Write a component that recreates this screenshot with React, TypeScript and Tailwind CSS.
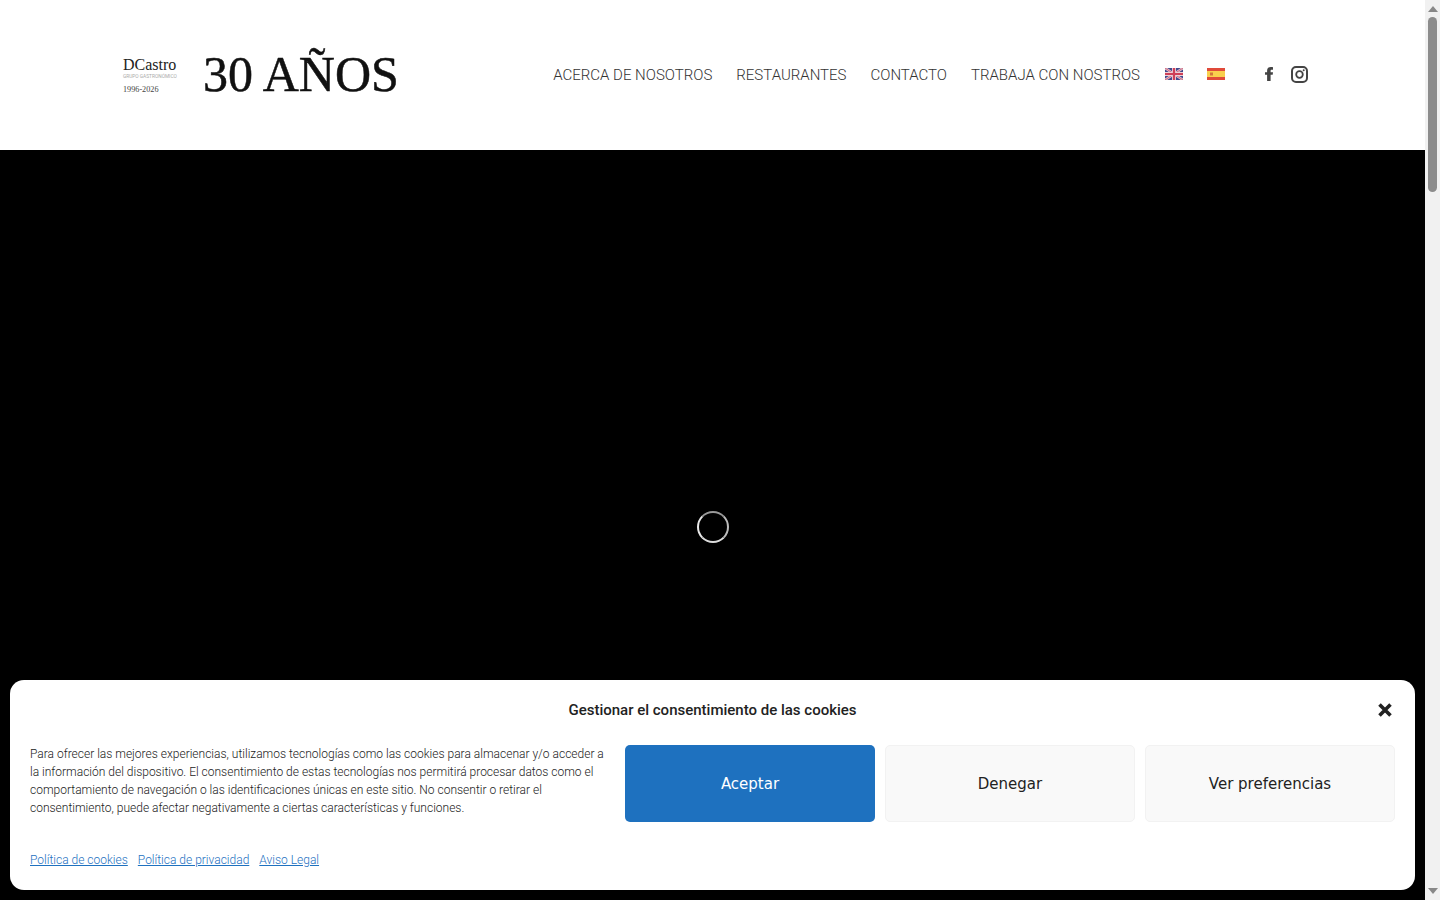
import React from 'react';

const navItems = ['ACERCA DE NOSOTROS', 'RESTAURANTES', 'CONTACTO', 'TRABAJA CON NOSTROS'];

const Logo = () => (
  <div className="flex items-center">
    <div className="w-[80px] h-[50px] flex flex-col text-[#222]">
      <span className="mt-[6px] text-[16px] leading-[18px] font-['Liberation_Serif',serif]">DCastro</span>
      <span className="text-[4.800px] leading-[6px] text-[#aaa] font-['Roboto',sans-serif] whitespace-nowrap">GRUPO GASTRONÓMICO</span>
      <span className="mt-[4px] text-[8.200px] leading-[12px] text-[#444] font-['Liberation_Serif',serif]">1996-2026</span>
    </div>
    <span className="mb-[2px] text-[50px] leading-[50px] text-[#111] whitespace-nowrap font-['Liberation_Serif',serif] [-webkit-text-stroke:0.5px_#111]">30 AÑOS</span>
  </div>
);

const FlagUK = () => (
  <svg width="18" height="12" viewBox="0 0 18 12">
    <rect width="18" height="12" fill="#414a8e" />
    <path d="M0 0L18 12M18 0L0 12" stroke="#e6c3cf" strokeWidth="2.400" />
    <path d="M0 0L18 12M18 0L0 12" stroke="#c9506a" strokeWidth="0.800" />
    <path d="M9 0V12M0 6H18" stroke="#ecd0d6" strokeWidth="4" />
    <path d="M9 0V12M0 6H18" stroke="#cf4058" strokeWidth="2.200" />
  </svg>
);

const FlagES = () => (
  <svg width="18" height="12" viewBox="0 0 18 12">
    <rect width="18" height="12" fill="#e04a3a" />
    <rect y="3" width="18" height="6" fill="#f9cf4d" />
    <rect x="3" y="4.500" width="3" height="3" fill="#d2763c" />
  </svg>
);

const Facebook = () => (
  <svg width="8" height="14" viewBox="0 0 8 14" fill="#444">
    <path d="M5.600 14V7.800h2.100l.3-2.500H5.600V3.900c0-.8.2-1.200 1.200-1.200H8V.2C7.600.1 6.800 0 5.900 0 3.700 0 2.100 1.200 2.100 3.400v1.900H0v2.500h2.100V14z" />
  </svg>
);

const Instagram = () => (
  <svg width="17" height="17" viewBox="0 0 17 17" fill="none" stroke="#444">
    <rect x="1" y="1" width="15" height="15" rx="4" strokeWidth="2" />
    <circle cx="8.500" cy="8.500" r="3.300" strokeWidth="1.800" />
    <circle cx="12.700" cy="4.300" r="1" fill="#444" stroke="none" />
  </svg>
);

const ScrollArrow = ({ down }: { down?: boolean }) => (
  <svg width="10" height="6" viewBox="0 0 10 6" fill="#888">
    <path d={down ? 'M0 0H10L5 6z' : 'M0 6H10L5 0z'} />
  </svg>
);

export default function App() {
  return (
    <div className="relative h-[900px] w-[1440px] overflow-hidden flex bg-black font-['Roboto',sans-serif]">
      <main className="w-[1425px] flex flex-col">
        <header className="h-[150px] shrink-0 bg-white flex items-center pl-[123px] pr-[117px]">
          <Logo />
          <nav className="ml-auto flex items-center">
            <div className="flex items-center gap-[24px] text-[15px] font-light text-[#333]">
              {navItems.map((item) => (
                <a key={item} className="whitespace-nowrap">{item}</a>
              ))}
              <div className="flex items-center gap-[24px] mb-[2px] ml-[1px]">
                <FlagUK />
                <FlagES />
              </div>
            </div>
            <div className="ml-[40px] mb-[2px] flex items-center gap-[18px]">
              <Facebook />
              <Instagram />
            </div>
          </nav>
        </header>

        {/* video area */}
        <div className="flex-1 bg-black pt-[361px] flex justify-center">
          <div className="w-[32px] h-[32px] rounded-full border-2 blur-[0.4px] border-t-[#999] border-r-[#bbb] border-b-[#ddd] border-l-[#e8e8e8]" />
        </div>
      </main>

      <div className="w-[15px] shrink-0 bg-[#f1f1f1] flex flex-col items-center justify-between py-[6px]">
        <div className="flex flex-col items-center gap-[5px] w-full">
          <ScrollArrow />
          <div className="w-[9px] h-[175px] rounded-full bg-[#8c8c8c]" />
        </div>
        <ScrollArrow down />
      </div>

      {/* cookie banner */}
      <div className="absolute left-[10px] top-[680px] w-[1405px] h-[210px] bg-white rounded-[14px] px-[20px] pt-[20px]">
        <div className="relative h-[20px] flex items-center justify-center">
          <h2 className="text-[15px] font-medium text-[#222]">Gestionar el consentimiento de las cookies</h2>
          <svg className="absolute right-[2px] top-[2px]" width="16" height="16" viewBox="0 0 16 16">
            <path d="M2.500 2.500L13.500 13.500M13.500 2.500L2.500 13.500" stroke="#222" strokeWidth="3.600" />
          </svg>
        </div>
        <div className="mt-[25px] flex gap-[10px]">
          <div className="w-[585px] text-[12px] leading-[18px] font-light text-[#222]">
            <p>
              Para ofrecer las mejores experiencias, utilizamos tecnologías como las cookies para almacenar y/o acceder a la información del dispositivo. El consentimiento de estas tecnologías nos permitirá procesar datos como el comportamiento de navegación o las identificaciones únicas en este sitio. No consentir o retirar el consentimiento, puede afectar negativamente a ciertas características y funciones.
            </p>
          </div>
          <div className="flex-1 grid grid-cols-3 gap-[10px] h-[77px] font-['DejaVu_Sans',sans-serif] text-[15px]">
            <button className="rounded-[5px] bg-[#1e71bf] text-white pt-[2px]">Aceptar</button>
            <button className="rounded-[5px] bg-[#f9f9f9] border border-[#f2f2f2] text-[#222] pt-[2px]">Denegar</button>
            <button className="rounded-[5px] bg-[#f9f9f9] border border-[#f2f2f2] text-[#222] pt-[2px]">Ver preferencias</button>
          </div>
        </div>
        <div className="mt-[29px] flex gap-[10px] text-[12px] leading-[18px] font-light text-[#1e71bf]">
          <a className="underline">Política de cookies</a>
          <a className="underline">Política de privacidad</a>
          <a className="underline">Aviso Legal</a>
        </div>
      </div>
    </div>
  );
}
